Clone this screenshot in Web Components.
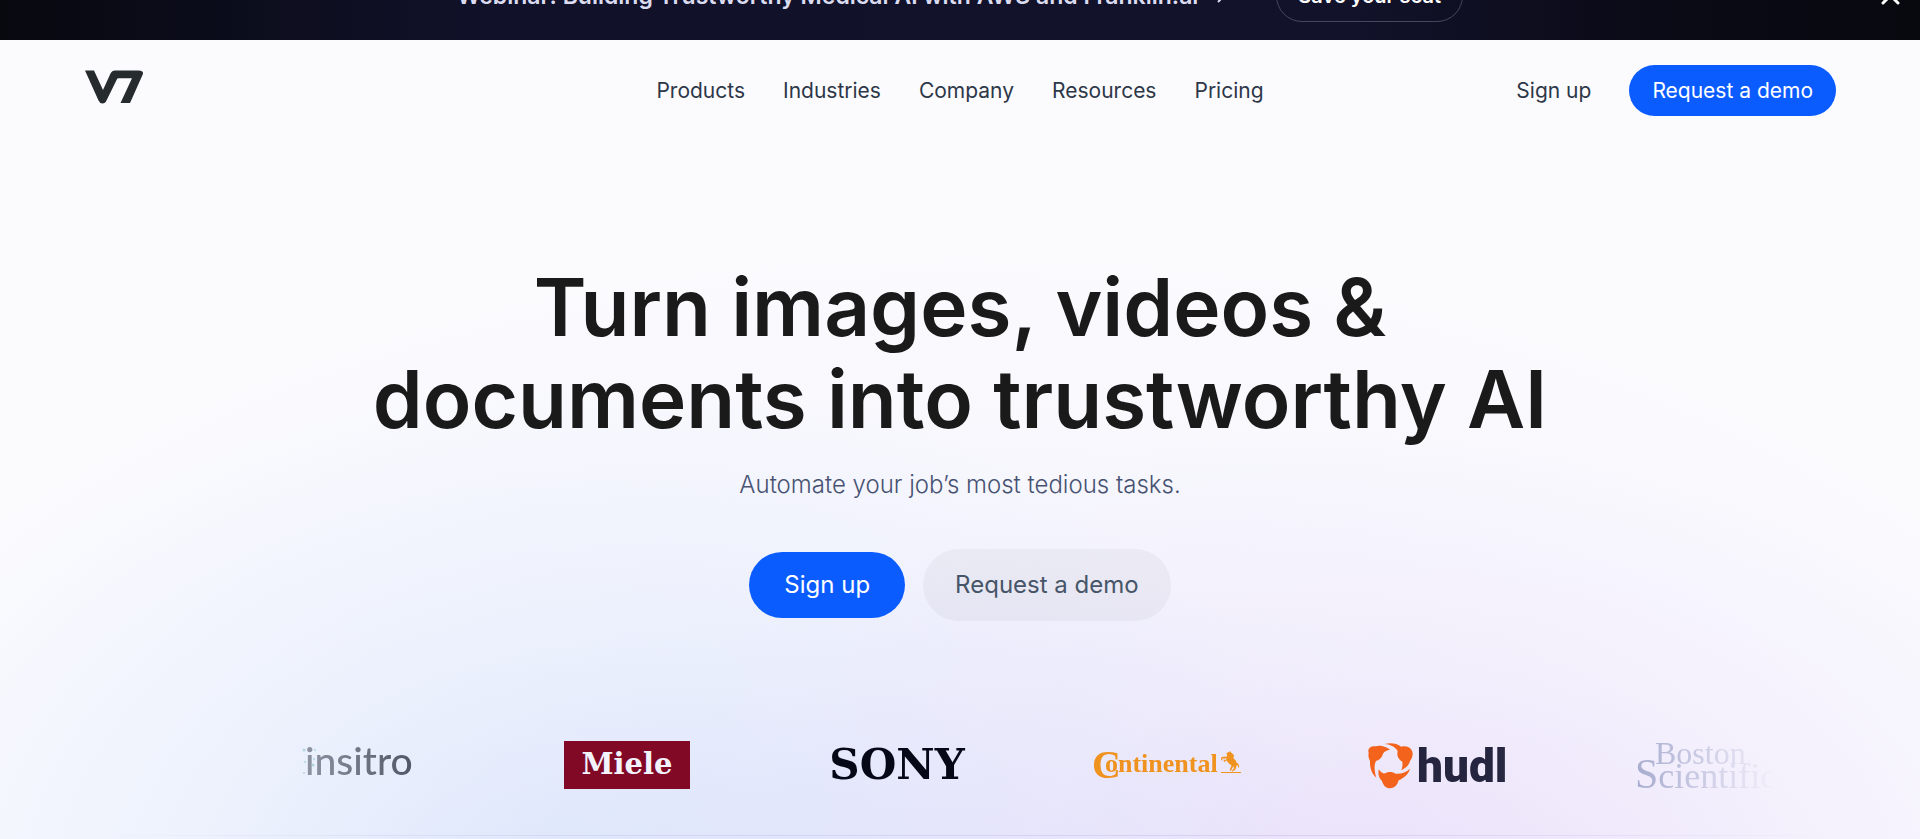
<!DOCTYPE html>
<html lang="en">
<head>
<meta charset="utf-8">
<meta name="viewport" content="width=device-width, initial-scale=1">
<title>V7</title>
<style>
    html, body {
        margin: 0;
    }

    body {
        --blue: #0b5cff;
        --ink: #2d3748;
        min-height: 100vh;
        font-family: Inter, sans-serif;
        color: var(--ink);
        background: #fbfbfe;
    }
</style>
</head>
<body>
<v7-page></v7-page>

<script>
class PillLink extends HTMLElement {

    constructor() {
        super();
        this.shadowDOM = this.attachShadow({mode: "open"});
    }

    connectedCallback() {
        this.shadowDOM.innerHTML = `
        <style>
        :host {
            display: block;
        }

        a {
            display: block;
            padding: 13px 23px;
            border-radius: 36px;
            background: var(--blue);
            color: white;
            font-size: 21px;
            line-height: 25px;
            text-decoration: none;
            white-space: nowrap;
        }

        :host([kind="large"]) a {
            padding: 17px 35px;
            font-size: 24px;
            line-height: 32px;
        }

        :host([kind="muted"]) a {
            padding: 20px 32px;
            background: rgba(26, 26, 26, 0.04);
            color: #475569;
            font-size: 24px;
            line-height: 32px;
        }

        :host([kind="outline"]) a {
            padding: 13px 21px;
            border: 1px solid #46465c;
            background: none;
            font-size: 20px;
            font-weight: 600;
            line-height: 24px;
        }
        </style>
        <a href="#"><slot></slot></a>`;
    }
}

class PromoBanner extends HTMLElement {

    constructor() {
        super();
        this.shadowDOM = this.attachShadow({mode: "open"});
    }

    connectedCallback() {
        this.shadowDOM.innerHTML = `
        <style>
        :host {
            display: grid;
            grid-template-columns: 1fr auto 1fr;
            align-items: center;
            height: 88px;
            margin-top: -48px;
            padding: 0 20px;
            background: linear-gradient(90deg, #07090f 0%, #11112a 26%, #12122b 70%, #0a0b16 86%, #07090f 100%);
        }

        .content {
            grid-column: 2;
            display: flex;
            align-items: center;
            gap: 50px;
        }

        .text {
            display: flex;
            align-items: center;
            gap: 12px;
            color: #dcdcf0;
            font-size: 23px;
            font-weight: 600;
            line-height: 28px;
            text-decoration: none;
            white-space: nowrap;
        }

        button {
            justify-self: end;
            display: flex;
            padding: 0;
            border: none;
            background: none;
            cursor: pointer;
        }
        </style>
        <div class="content">
            <a class="text" href="#">
                <slot></slot>
                <svg width="16" height="16" viewBox="0 0 16 16" fill="none" stroke="#dcdcf0" stroke-width="2"><path d="M1 8h13M8 2l6 6-6 6"/></svg>
            </a>
            <slot name="action"></slot>
        </div>
        <button type="button" aria-label="Close">
            <svg width="20" height="20" viewBox="0 0 20 20" stroke="white" stroke-width="3" stroke-linecap="round"><path d="M3 2l15 15M18 2L3 17"/></svg>
        </button>`;
    }
}

class SiteHeader extends HTMLElement {

    constructor() {
        super();
        this.shadowDOM = this.attachShadow({mode: "open"});
    }

    connectedCallback() {
        this.shadowDOM.innerHTML = `
        <style>
        :host {
            display: grid;
            grid-template-columns: 1fr auto 1fr;
            align-items: center;
            padding: 25px 84px;
        }

        .logo {
            justify-self: start;
            display: flex;
            padding-bottom: 8px;
        }

        nav, .account {
            display: flex;
            align-items: center;
            gap: 38px;
        }

        .account {
            justify-self: end;
        }

        .link {
            color: var(--ink);
            font-size: 21px;
            line-height: 24px;
            text-decoration: none;
            white-space: nowrap;
        }
        </style>
        <a class="logo" href="#" aria-label="V7">
            <svg width="60" height="34" viewBox="0 0 60 34" fill="#262b2d"><path d="M1 0.5H10L19 20L26.500 3.500Q28 0.500 31 0.500H54.500Q60.500 0.500 58.500 5L46 33H36.500L48 8.300H34.500Q33.300 8.300 32.800 9.500L22.500 30.500Q21.300 33.500 18.500 33.500Q15.800 33.500 14.500 30.500Z"/></svg>
        </a>
        <nav>
            <a class="link" href="#">Products</a>
            <a class="link" href="#">Industries</a>
            <a class="link" href="#">Company</a>
            <a class="link" href="#">Resources</a>
            <a class="link" href="#">Pricing</a>
        </nav>
        <div class="account">
            <a class="link" href="#">Sign up</a>
            <pill-link>Request a demo</pill-link>
        </div>`;
    }
}

class HeroSection extends HTMLElement {

    constructor() {
        super();
        this.shadowDOM = this.attachShadow({mode: "open"});
    }

    connectedCallback() {
        this.shadowDOM.innerHTML = `
        <style>
        :host {
            display: flex;
            flex-direction: column;
            align-items: center;
            padding-top: 120px;
            text-align: center;
        }

        ::slotted(h1) {
            margin: 0;
            color: #1a1a1b;
            font-size: 80px;
            font-weight: 600;
            line-height: 92px;
        }

        ::slotted(p) {
            margin: 24px 0 48px;
            color: #475272;
            font-size: 24px;
            font-weight: 300;
            line-height: 32px;
        }

        .actions {
            display: flex;
            align-items: center;
            gap: 18px;
        }
        </style>
        <slot></slot>
        <div class="actions"><slot name="actions"></slot></div>`;
    }
}

class BrandLogo extends HTMLElement {

    constructor() {
        super();
        this.shadowDOM = this.attachShadow({mode: "open"});
    }

    get logos() {
        return {
            insitro: `
                <svg width="110" height="48" viewBox="0 0 110 48" role="img" aria-label="insitro">
                    <text x="3" y="34" font-family="Lato, sans-serif" font-size="39" font-weight="500" fill="#4b5262">insitro</text>
                    <g fill="#5fb3b8" opacity=".7">
                        <circle cx="2" cy="9" r="1.500"/><circle cx="12" cy="18" r="1"/><circle cx="3" cy="21" r="1"/>
                        <circle cx="11" cy="24" r="1.500"/><circle cx="2" cy="32" r="1"/><circle cx="13" cy="9" r="1"/>
                    </g>
                </svg>`,
            miele: `
                <svg width="126" height="48" viewBox="0 0 126 48" role="img" aria-label="Miele">
                    <rect width="126" height="48" fill="#820926"/>
                    <text x="63" y="33" text-anchor="middle" font-family="'DejaVu Serif', serif" font-size="29" font-weight="900" fill="#f2f3fd">Miele</text>
                </svg>`,
            sony: `
                <svg width="146" height="48" viewBox="0 0 146 48" role="img" aria-label="SONY">
                    <text x="73" y="38" text-anchor="middle" font-family="'DejaVu Serif', serif" font-size="42" font-weight="700" fill="#070817">SONY</text>
                </svg>`,
            continental: `
                <svg width="148" height="48" viewBox="0 0 148 48" role="img" aria-label="Continental" fill="#f0921e">
                    <text font-family="'Liberation Serif', serif" font-weight="700"><tspan x="-1" y="37" font-size="40">C</tspan><tspan x="12" y="31" font-size="26">ontinental</tspan></text>
                    <path d="M128 31h20v1h-20z"/>
                    <path d="M137 10L138.500 12L141 14L140.500 16.500C140 18 143 18.500 143.500 21L143.500 22C145.500 22 146.500 24 146 27L145 26C145 24.500 144.500 24 143.500 24.500L142.500 28.500L139.500 30.500L138.500 30L141 27.500L140.500 25L138 29.500L136.500 29.500L138.500 24.500C136 23 134.500 21 134 19.500L131 21L130.500 18.500L131.500 18.500L132 19.500L134 17.500L129.500 17.500L129 19.500L128 19L128.500 16L134 15.500C134.500 13.500 133.500 13 133.500 12L136 11Z"/>
                </svg>`,
            hudl: `
                <svg width="138" height="48" viewBox="0 0 138 48" role="img" aria-label="hudl">
                    <g fill="#f4631b" transform="translate(0 2) scale(.3333)">
                        <path d="M2 30C-2 16 8 8 24 10C34 4 58 12 66 20C54 22 46 26 43 38C38 48 32 50 24 54C17 68 20 86 25 104C10 92 5 72 6 54C2 46 0 38 2 30Z"/>
                        <path d="M50 3C66-2 86 0 100 11C118 6 134 16 134 32C134 42 130 48 126 54C124 66 112 76 100 82C104 72 104 64 103 56C90 48 86 38 89 24C80 10 66 4 50 3Z"/>
                        <path d="M126 77C122 94 108 104 92 112C88 128 78 136 66 136C54 136 46 128 42 114C32 106 30 92 32 79C40 90 46 92 52 91C60 86 74 86 82 92C98 94 114 88 126 77Z"/>
                    </g>
                    <text x="49" y="41" font-family="Roboto, sans-serif" font-size="46" font-weight="900" fill="#25253f">hudl</text>
                </svg>`,
            boston: `
                <svg width="144" height="48" viewBox="0 0 144 48" role="img" aria-label="Boston Scientific" fill="#5f6ea3" font-family="'Liberation Serif', serif">
                    <text x="20" y="23" font-size="32">Boston</text>
                    <text x="0" y="47" font-size="36"><tspan font-size="42">S</tspan>cientific</text>
                </svg>`
        };
    }

    connectedCallback() {
        this.shadowDOM.innerHTML = `
        <style>
        :host {
            display: flex;
            justify-content: center;
        }

        svg {
            overflow: visible;
        }
        </style>
        ${this.logos[this.getAttribute("name")]}`;
    }
}

class LogoStrip extends HTMLElement {

    constructor() {
        super();
        this.shadowDOM = this.attachShadow({mode: "open"});
    }

    connectedCallback() {
        this.shadowDOM.innerHTML = `
        <style>
        :host {
            display: block;
            margin: 120px 144px 0;
            padding-bottom: 46px;
            overflow: hidden;
            -webkit-mask-image: linear-gradient(90deg, transparent, black 17%, black 83%, transparent);
            mask-image: linear-gradient(90deg, transparent, black 17%, black 83%, transparent);
        }

        .track {
            display: grid;
            grid-auto-flow: column;
            grid-auto-columns: 270px;
            padding-left: 78px;
        }
        </style>
        <div class="track">
            <brand-logo name="insitro"></brand-logo>
            <brand-logo name="miele"></brand-logo>
            <brand-logo name="sony"></brand-logo>
            <brand-logo name="continental"></brand-logo>
            <brand-logo name="hudl"></brand-logo>
            <brand-logo name="boston"></brand-logo>
        </div>`;
    }
}

class V7Page extends HTMLElement {

    constructor() {
        super();
        this.shadowDOM = this.attachShadow({mode: "open"});
    }

    connectedCallback() {
        this.shadowDOM.innerHTML = `
        <style>
        :host {
            display: flow-root;
            overflow: hidden;
            min-height: 100vh;
            background:
                radial-gradient(ellipse 42% 56% at 74% 106%, rgba(226, 205, 248, 0.45), rgba(232, 216, 250, 0.22) 50%, transparent),
                radial-gradient(ellipse 40% 64% at 30% 108%, rgba(200, 218, 250, 0.5), rgba(212, 228, 252, 0.28) 50%, transparent),
                radial-gradient(ellipse 62% 76% at 50% 106%, rgba(220, 220, 248, 0.6), rgba(236, 236, 251, 0.4) 50%, transparent),
                #fbfbfe;
        }

        hr {
            height: 1px;
            margin: 0 0 2px;
            border: none;
            background: linear-gradient(90deg, transparent 4%, #d3d5f3 35%, #d8d0f3 70%, transparent 96%);
        }
        </style>
        <promo-banner>
            Webinar: Building Trustworthy Medical AI with AWS and Franklin.ai
            <pill-link slot="action" kind="outline">Save your seat</pill-link>
        </promo-banner>
        <site-header></site-header>
        <hero-section>
            <h1>Turn images, videos &amp;<br>documents into trustworthy AI</h1>
            <p>Automate your job’s most tedious tasks.</p>
            <pill-link slot="actions" kind="large">Sign up</pill-link>
            <pill-link slot="actions" kind="muted">Request a demo</pill-link>
        </hero-section>
        <logo-strip></logo-strip>
        <hr>`;
    }
}

customElements.define("pill-link", PillLink);
customElements.define("promo-banner", PromoBanner);
customElements.define("site-header", SiteHeader);
customElements.define("hero-section", HeroSection);
customElements.define("brand-logo", BrandLogo);
customElements.define("logo-strip", LogoStrip);
customElements.define("v7-page", V7Page);
</script>
</body>
</html>
